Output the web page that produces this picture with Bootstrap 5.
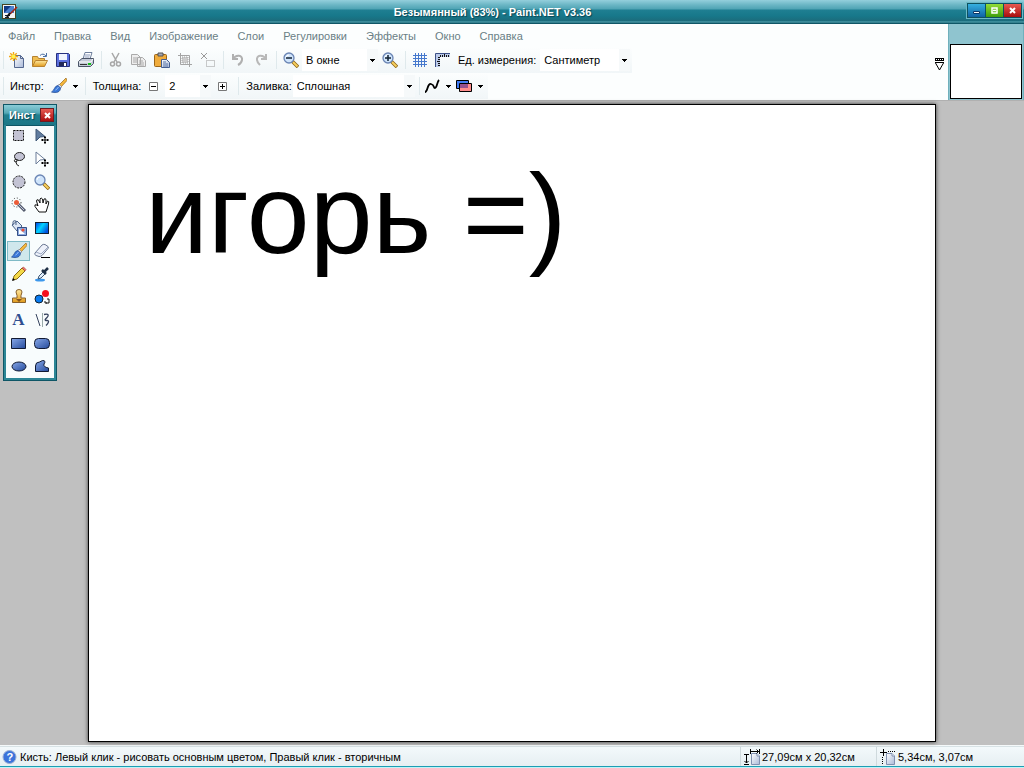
<!DOCTYPE html>
<html lang="ru">
<head>
<meta charset="utf-8">
<meta name="viewport" content="width=device-width, initial-scale=1">
<title>Безымянный (83%) - Paint.NET v3.36</title>
<link href="https://cdn.jsdelivr.net/npm/bootstrap@5.3.0/dist/css/bootstrap.min.css" rel="stylesheet">
<style>
body{font:11px/16px "Liberation Sans",Arial,sans-serif;color:#000;background:#c0c0c0}
svg{display:block;flex:none}
button{padding:0;border:0;background:none;color:inherit}
.titlebar{height:24px;background:linear-gradient(#94cfdc 0,#6ab5c4 5px,#4fa3b4 9px,#1f7f92 10px,#17788a 16px,#1c6b7b 21px,#5aabb8 22px,#0f5666 23px);color:#fff}
.titlebar h1{font:bold 11px/16px "Liberation Sans",Arial,sans-serif;text-shadow:1px 1px 1px #0b4452}
.titlebar .app-icon{margin-left:2px}
.win-buttons{gap:1px;padding:1px;margin-right:2px;background:#0d5160;outline:1px solid #6db9c6}
.win-buttons button{width:17px;height:13px;display:grid;place-items:center}
.b-min{background:linear-gradient(#35b0e0,#0f62a4)}
.b-max{background:linear-gradient(#93dc39,#3d9e0b)}
.b-close{background:linear-gradient(#e75a51,#a80d0d)}
.tools-area{background:#fcfefe}
.menu{height:23px;gap:19px;padding-left:8px}
.menu a{color:#6a7f85;text-decoration:none}
.strip{height:26px}
.band{height:26px;background:linear-gradient(#fcfefe,#f1f6f8);padding-left:3px;padding-right:2px}
.tb{width:23px;height:23px;display:grid;place-items:center;flex:none}
.drop{width:32px;display:flex;align-items:center;justify-content:space-between;height:23px;flex:none;padding:0 3px 0 2px}
.split{width:1px;height:18px;background:#dfe9ec;margin:0 2px 0 4px;flex:none}
.split.first{margin:0 1px 0 0}
.pick{appearance:none;border:0;border-radius:0;height:22px;padding:0 14px 0 4px;font:inherit;color:#000;background:#fff url("data:image/svg+xml,%3Csvg xmlns='http://www.w3.org/2000/svg' width='11' height='22'%3E%3Cpath fill='%23f6f9fa' d='M0 0h11v22H0z'/%3E%3Cpath d='M3 10h5v1H7v1H6v1H5v-1H4v-1H3z'/%3E%3C/svg%3E") right center no-repeat;flex:none}
.label-s{flex:none;white-space:nowrap}
.opt{margin:0 1px 0 5px}
.thumbs{width:76px;background:#8fc4cf;border-left:1px solid #6fb0bc;border-right:1px solid #6fb0bc;padding:20px 1px 1px}
.thumb{display:block;border:1px solid #000;background:#fff;height:55px;width:100%}
.work{background:#c0c0c0;padding:3px 88px;border-top:1px solid #b0b0b0}
.sheet{border:1px solid #000;background:#fff;box-shadow:0 0 4px #333;padding:45px 56px}
.sheet p{font-size:113px;line-height:128px;white-space:nowrap}
.palette{position:absolute;left:3px;top:3px;width:54px;border:1px solid #0f5666;background:#2c8595;padding:0 2px 2px;box-shadow:inset 0 0 0 1px #2c8797}
.palette header{height:20px;margin:0 -2px;padding:0 3px 0 5px;background:linear-gradient(#8accd7,#56a8b6 8px,#21808f 10px,#1c7686);color:#fff;font-weight:bold;text-shadow:1px 1px 1px #0b4452}
.palette header button{width:12px;height:12px;display:grid;place-items:center;outline:1px solid #6d1b22}
.grid-tools{display:grid;grid-template-columns:23px 23px;gap:3px 0;background:#f8fcfd;padding:0 1px 2px;border-top:1px solid #0f5666}
.grid-tools button{height:20px;display:grid;place-items:center}
.grid-tools .on{background:#d0e7ec;outline:1px solid #7fbac6;outline-offset:-1px}
.letter{font:bold 17px/20px "Liberation Serif",serif;color:#304f91}
.status{height:23px;border-top:1px solid #f5f9fa;border-bottom:1px solid #bff3f7;background:#eef5f7}
.status-in{border-top:1px solid #d7e2e5;border-bottom:1px solid #1d9db3;background:linear-gradient(#f3f9fb,#e6eff2)}
.cell-a{padding-left:2px;gap:2px}
.cell-b,.cell-c{border-left:1px solid #cfdadd;gap:2px;padding-left:3px}
.cell-b{width:136px}.cell-c{width:148px}
</style>
</head>
<body class="vh-100 d-flex flex-column overflow-hidden">
<svg width="0" height="0" class="position-absolute" aria-hidden="true">
<defs>
<linearGradient id="gb" x2="1" y2="1"><stop stop-color="#88a8e8"/><stop offset="1" stop-color="#244a9c"/></linearGradient>
<linearGradient id="gy" x2="0" y2="1"><stop stop-color="#ffe9a0"/><stop offset="1" stop-color="#e09a1c"/></linearGradient>
<linearGradient id="gp" x2="1" y2="1"><stop stop-color="#fff"/><stop offset="1" stop-color="#a9b9d8"/></linearGradient>
<linearGradient id="gc" x2="1" y2=".6"><stop stop-color="#0038e8"/><stop offset=".5" stop-color="#00d4ff"/><stop offset="1" stop-color="#0050e0"/></linearGradient>
<symbol id="brush" viewBox="0 0 16 16"><path d="M15 0 8 7l2 2 6-6.500z" fill="#f6b83c" stroke="#99671d" stroke-width=".7"/><path d="m8 6 3 3-2 1-2-2z" fill="#e4e8f2" stroke="#667" stroke-width=".5"/><path d="M7 7.500C3 8 4 12 .5 14c5 1.500 9 0 9-4z" fill="#3a78d8" stroke="#1f478f" stroke-width=".7"/><path d="M4.500 12c2-1 2-2 3-3" stroke="#a7cbff" fill="none"/></symbol>
<symbol id="lens" viewBox="0 0 16 16"><path d="m9 9 6 6" stroke="#8c6414" stroke-width="3.500"/><path d="m10 10 4.500 4.500" stroke="#f7cf5e" stroke-width="2"/><circle cx="6" cy="6" r="5" fill="#cfe4fb" stroke="#6b85b4" stroke-width="1.300"/><path d="M3 6q0-3 3-3" stroke="#fff" fill="none"/></symbol>
<symbol id="page" viewBox="0 0 9 12"><path d="M.5.5H6l2.500 2.500v8.500h-8z" fill="url(#gp)" stroke="#8090b0"/><path d="M6 .5V3h2.500" fill="#fff" stroke="#8090b0"/></symbol>
<symbol id="cross" viewBox="0 0 7 7"><path d="M1 1l5 5M6 1 1 6" stroke="#fff" stroke-width="2"/></symbol>
<symbol id="caret" viewBox="0 0 5 3"><path d="M0 0h5v1H4v1H3v1H2V2H1V1H0z"/></symbol>
<symbol id="plusmove" viewBox="0 0 8 8"><path d="M4 0v8M0 4h8M3 1.500h2M3 6.500h2M1.500 3v2M6.500 3v2" stroke="#000"/></symbol>
</defs>
</svg>

<header class="titlebar d-flex align-items-center flex-shrink-0">
  <svg class="app-icon" width="16" height="18" viewBox="0 0 16 18"><rect x=".5" y="1.500" width="13" height="14" fill="#f5f5f5" stroke="#442"/><path d="M2 3h10v7H2z" fill="#4b82d0"/><path d="M2 3h7l-7 7z" fill="#103a83"/><path d="M3 12.500h5M3 14.500h4" stroke="#123"/><path d="M15 4 8 11" stroke="#a22518" stroke-width="1.600"/><path d="m8 10-3 4" stroke="#111" stroke-width="2"/></svg>
  <h1 class="flex-grow-1 text-center m-0">Безымянный (83%) - Paint.NET v3.36</h1>
  <div class="win-buttons d-flex mb-1">
    <button class="b-min" aria-label="Свернуть"><svg width="7" height="9"><path d="M.5 5.500h6v2h-6z" fill="#fff" stroke="#0b3768"/></svg></button>
    <button class="b-max" aria-label="Развернуть"><svg width="7" height="7"><path d="M1 1h5v5H1zM2 3.500h3" fill="none" stroke="#fff" stroke-width="1.500"/></svg></button>
    <button class="b-close" aria-label="Закрыть"><svg width="7" height="7"><use href="#cross"/></svg></button>
  </div>
</header>

<div class="d-flex flex-shrink-0">
 <div class="tools-area flex-grow-1 position-relative">
  <nav class="menu d-flex align-items-center" aria-label="Меню">
   <a href="#">Файл</a><a href="#">Правка</a><a href="#">Вид</a><a href="#">Изображение</a><a href="#">Слои</a><a href="#">Регулировки</a><a href="#">Эффекты</a><a href="#">Окно</a><a href="#">Справка</a>
  </nav>
  <div class="strip d-flex align-items-center">
   <div class="band d-flex align-items-center">
    <span class="split first"></span>
    <button class="tb" aria-label="Создать"><svg width="16" height="16"><path d="M5.500 3.500h6l3 3v9h-9z" fill="url(#gp)" stroke="#54678f"/><path d="M11.500 3.500v3h3" fill="none" stroke="#54678f"/><path d="M4.500 0v9M0 4.500h9M1.300 1.300l6.400 6.400M7.700 1.300 1.300 7.700" stroke="#f4a818" stroke-width="1.400"/><circle cx="4.500" cy="4.500" r="2" fill="#fff24a"/></svg></button>
    <button class="tb" aria-label="Открыть"><svg width="16" height="16"><path d="M.5 14V4.500h5l1 2h6V14z" fill="#f0be50" stroke="#b58230"/><path d="m.5 14.500 3-6h12l-3 6z" fill="url(#gy)" stroke="#b98330"/><path d="M8 3.500q3-3 6 .5M14.500 1v3.500H11" fill="none" stroke="#4b70a4"/></svg></button>
    <button class="tb" aria-label="Сохранить"><svg width="16" height="16"><path d="M1.500 1.500h12l1 1v12h-13z" fill="#5c70de" stroke="#27317e"/><path d="M4 2h8v6H4z" fill="#f1f5ff"/><path d="M4 10h8v4H4z" fill="#232a58"/><path d="M9 11h2v3H9z" fill="#fff"/></svg></button>
    <button class="tb" aria-label="Печать"><svg width="16" height="16"><path d="m5 7 2-6.500h7L12 7z" fill="#fff" stroke="#6e7f9c"/><path d="M7 3h5M6.500 5h5" stroke="#8999ba"/><path d="M.5 9.500 4 6.500h11.500v5l-3 3H.5z" fill="#c3cad7" stroke="#4b5568"/><path d="M1 10h12l2-3" fill="none" stroke="#fff"/><path d="M2 12.500h7" stroke="#333"/><path d="M10 12h3" stroke="#15bf1a" stroke-width="2"/></svg></button>
    <span class="split"></span>
    <button class="tb" aria-label="Вырезать"><svg width="16" height="16" fill="none" stroke="#a7a7a7" stroke-width="1.500"><path d="m4 1 5 9M11 1 6 10"/><circle cx="4.500" cy="12" r="2"/><circle cx="10.500" cy="12" r="2"/></svg></button>
    <button class="tb" aria-label="Копировать"><svg width="16" height="16" fill="#eee" stroke="#aaa"><path d="M.5 2.500h6l3 3v7h-9zM6.500 5.500h5l3 3v6h-8z"/><path d="M2 6h4M2 8h4M2 10h4M8 9h4M8 11h5M8 13h5"/></svg></button>
    <button class="tb" aria-label="Вставить"><svg width="16" height="16"><rect x=".5" y="2.500" width="12" height="12" rx="1" fill="#f0ac3c" stroke="#9b6518"/><path d="M4 1h5v3H4z" fill="#a3a7b5" stroke="#555"/><path d="M7.500 7.500h5l3 3v5h-8z" fill="url(#gp)" stroke="#455e91"/><path d="M9 10h3M9 12h5M9 14h5" stroke="#5873a5"/></svg></button>
    <button class="tb" aria-label="Обрезать"><svg width="16" height="16" fill="none" stroke="#a5a5a5"><path d="M3.500 1v11.500H15M1 3.500h11.500V15"/><rect x="5" y="5" width="6" height="6" fill="#ccc" stroke-dasharray="1 1"/></svg></button>
    <button class="tb" aria-label="Снять выделение"><svg width="16" height="16" fill="none" stroke="#999"><path d="m1 1 6 6M7 1 1 7"/><path d="M6.500 8.500h8v6h-8z" stroke-dasharray="1 1"/></svg></button>
    <span class="split"></span>
    <button class="tb" aria-label="Отменить"><svg width="16" height="16" fill="none" stroke="#b0b0b0" stroke-width="2"><path d="M3 2v5h5M3 7c3-5 10-4 9 1-.5 3-2 4-4 5"/></svg></button>
    <button class="tb" aria-label="Вернуть"><svg width="16" height="16" fill="none" stroke="#b8b8b8" stroke-width="2"><path d="M13 2v5H8M13 7C10 2 3 3 4 8c.5 3 2 4 3 5"/></svg></button>
    <span class="split"></span>
    <button class="tb" aria-label="Уменьшить"><svg width="16" height="16"><use href="#lens"/><path d="M3 6h6" stroke="#123" stroke-width="1.500"/></svg></button>
    <select class="pick" style="width:76px" aria-label="Масштаб"><option>В окне</option></select>
    <button class="tb" aria-label="Увеличить"><svg width="16" height="16"><use href="#lens"/><path d="M3 6h6M6 3v6" stroke="#123" stroke-width="1.500"/></svg></button>
    <span class="split"></span>
    <button class="tb" aria-label="Сетка"><svg width="16" height="16"><path d="M3.500 1v14M6.500 1v14M9.500 1v14M12.500 1v14M1 3.500h14M1 6.500h14M1 9.500h14M1 12.500h14" stroke="#4578cd"/></svg></button>
    <button class="tb" aria-label="Линейки"><svg width="16" height="16"><path d="M1 1h14v4H5v10H1z" fill="#bccbea"/><path d="M.5 15V1.500H15" fill="none" stroke="#3d5187"/><path d="M5.500 3v2M7.500 3v2M9.500 2v3M11.500 3v2M13.500 3v2M3 5.500h2M3 7.500h2M2 9.500h3M3 11.500h2M3 13.500h2" stroke="#111"/></svg></button>
    <label class="label-s mx-1" for="units">Ед. измерения:</label>
    <select class="pick" id="units" style="width:90px"><option>Сантиметр</option></select>
   </div>
  </div>
  <div class="strip d-flex align-items-center">
   <div class="band d-flex align-items-center">
    <span class="split first"></span>
    <span class="label-s opt pe-1">Инстр:</span>
    <button class="drop" aria-label="Инструмент"><svg width="16" height="16"><use href="#brush"/></svg><svg width="5" height="3"><use href="#caret"/></svg></button>
    <span class="split"></span>
    <label class="label-s opt" for="bw">Толщина:</label>
    <button class="tb" aria-label="Тоньше"><svg width="9" height="9"><path d="M.5.5h8v8h-8z" fill="#fff" stroke="#777"/><path d="M2 4.500h5" stroke="#000"/></svg></button>
    <select class="pick" id="bw" style="width:46px"><option>2</option></select>
    <button class="tb" aria-label="Толще"><svg width="9" height="9"><path d="M.5.5h8v8h-8z" fill="#fff" stroke="#777"/><path d="M2 4.500h5M4.500 2v5" stroke="#000"/></svg></button>
    <span class="split"></span>
    <label class="label-s opt" for="fill">Заливка:</label>
    <select class="pick" id="fill" style="width:122px"><option>Сплошная</option></select>
    <span class="split"></span>
    <button class="drop" aria-label="Сглаживание"><svg width="16" height="16"><path d="M1 14C4 14 3 5 7 6s2 4 4 4 2-6 4-8" fill="none" stroke="#000" stroke-width="1.800"/></svg><svg width="5" height="3"><use href="#caret"/></svg></button>
    <button class="drop" aria-label="Наложение"><svg width="16" height="14"><path d="M.5 1.500h12v8H.500z" fill="#3f7bf5" stroke="#000"/><path d="M3.500 4.500h12v8h-12z" fill="#ff8d8d" stroke="#000"/><path d="M4 5h8v4H4z" fill="#95508f"/></svg><svg width="5" height="3"><use href="#caret"/></svg></button>
   </div>
  </div>
  <button class="position-absolute bottom-0 end-0 mb-4 me-1" style="height:20px" aria-label="Список изображений"><svg width="9" height="13" class="mb-1"><path d="M0 0h9v3H0z"/><path d="M1 1.500h7" stroke="#fff" stroke-dasharray="1 1"/><path d="M0 4.500h9M.500 5l4 7 4-7" fill="none" stroke="#000"/></svg></button>
 </div>
 <aside class="thumbs flex-shrink-0"><button class="thumb" aria-label="Безымянный"></button></aside>
</div>

<main class="work flex-grow-1 position-relative d-flex">
 <section class="sheet flex-grow-1"><p class="m-0">игорь =)</p></section>
 <section class="palette">
  <header class="d-flex align-items-center justify-content-between">Инст<button class="b-close" aria-label="Закрыть"><svg width="7" height="7"><use href="#cross"/></svg></button></header>
  <div class="grid-tools">
   <button aria-label="Выделение"><svg width="16" height="16"><rect x="2.500" y="2.500" width="10" height="10" fill="#c3c3d4" stroke="#111" stroke-dasharray="2 1"/></svg></button>
   <button aria-label="Перемещение"><svg width="16" height="17"><path d="M2 1v12l4-4 5-.5z" fill="#617d9f" stroke="#405877"/><use href="#plusmove" x="7" y="8" width="8" height="8"/></svg></button>
   <button aria-label="Лассо"><svg width="16" height="16"><ellipse cx="8.500" cy="5.500" rx="5" ry="4" fill="#c3c3d4" stroke="#222"/><path d="M5 8q-3 1-1 3 3 0 2-3M5 11q0 3 3 4" fill="none" stroke="#222"/></svg></button>
   <button aria-label="Перемещение выделения"><svg width="16" height="17"><path d="M2 1v12l4-4 5-.5z" fill="#fff" stroke="#6b7d99"/><use href="#plusmove" x="7" y="8" width="8" height="8"/></svg></button>
   <button aria-label="Овальное выделение"><svg width="16" height="16"><circle cx="8" cy="8" r="6" fill="#c3c3d4" stroke="#111" stroke-dasharray="2 1"/></svg></button>
   <button aria-label="Лупа"><svg width="16" height="16"><use href="#lens"/></svg></button>
   <button aria-label="Волшебная палочка"><svg width="16" height="16"><circle cx="5.500" cy="5.500" r="4.500" fill="none" stroke="#333" stroke-dasharray="1 2"/><path d="m7 7 7 7" stroke="#555b6d" stroke-width="3"/><path d="m7 7 6 6" stroke="#bdc5db" stroke-width="1"/><circle cx="5.500" cy="5.500" r="2.500" fill="#ec5c37"/></svg></button>
   <button aria-label="Рука"><svg width="16" height="16"><path d="M5 15 1 9.500Q0 7 3 8l1 1-1.500-5q0-2 2-1L6 6V2q1-2 2.500 0L9 6l1-4q2-1 2 1v4l1.500-3q2 0 1 3L12 15z" fill="#fff" stroke="#111"/></svg></button>
   <button aria-label="Заливка"><svg width="16" height="16"><path d="m1 5 5-4 5 5-5 5z" fill="#dce6f5" stroke="#4b6289"/><path d="M2 5V2q0-2 3-1v4" fill="none" stroke="#4b6289"/><path d="M6.500 7.500h9v8h-9z" fill="#8dabe0" stroke="#354f88"/><path d="M8 14V9l6 5z" fill="#fff"/><circle cx="12" cy="10" r="1.600" fill="#ed5034"/></svg></button>
   <button aria-label="Градиент"><svg width="14" height="12"><rect x=".5" y=".5" width="13" height="11" fill="url(#gc)" stroke="#123"/></svg></button>
   <button class="on" aria-label="Кисть"><svg width="16" height="16"><use href="#brush"/></svg></button>
   <button aria-label="Ластик"><svg width="16" height="16"><path d="m1 10 7-8q1-1 3-.500l3 2q1 1 0 2l-6 7q-1 1-3 1l-3-1q-2-1-1-2.500z" fill="#edf1fa" stroke="#6b7893"/><path d="m2 9 5 2 7-7" fill="none" stroke="#9daac4"/><path d="M7 14.500h9" stroke="#000"/></svg></button>
   <button aria-label="Карандаш"><svg width="16" height="16"><path d="m2 14 1-4 8-8 3 3-8 8z" fill="#f4d948" stroke="#846817"/><path d="m11 2 1.500-1L15 3.500 14 5z" fill="#ee786e" stroke="#a43c32" stroke-width=".6"/><path d="m1 15 1-3 2 2z"/></svg></button>
   <button aria-label="Пипетка"><svg width="16" height="16"><ellipse cx="6" cy="14" rx="5" ry="1.500" fill="#3d98ec"/><path d="m4 13 1-3 5-5 2 2-5 5z" fill="#e1effb" stroke="#3e5876"/><path d="m8 4 4 4M10 6l4-4" stroke="#1f3046" stroke-width="2.500"/></svg></button>
   <button aria-label="Штамп"><svg width="16" height="16"><path d="M6 6.500 5 3q0-2.500 3-2.500T11 3l-1 3.500V9h4.500v4.500h-13V9H6z" fill="url(#gy)" stroke="#88612c"/><path d="M5 10h6l-3 3z" fill="#85541d"/></svg></button>
   <button aria-label="Замена цвета"><svg width="16" height="16"><circle cx="11.500" cy="4.500" r="3.500" fill="#f3101e"/><circle cx="5" cy="10" r="4" fill="#087cf2" stroke="#123"/><path d="M10 13h2v2M12 14h3v-4h-2" fill="none" stroke="#111"/></svg></button>
   <button class="letter" aria-label="Текст">A</button>
   <button aria-label="Линия"><svg width="16" height="16" fill="none" stroke="#35425e"><path d="m2 2 4 12"/><path d="M8.500 1v14" stroke="#9aa"/><path d="M10 2.500c5-1 5 1 3 3s-3 3 0 3 1 3-1 5" stroke-width="1.300"/></svg></button>
   <button aria-label="Прямоугольник"><svg width="15" height="11"><path d="M.5.5h14v10H.5z" fill="url(#gb)" stroke="#111a33"/></svg></button>
   <button aria-label="Скругленный прямоугольник"><svg width="16" height="11"><rect x=".5" y=".5" width="15" height="10" rx="4" fill="url(#gb)" stroke="#111a33"/></svg></button>
   <button aria-label="Эллипс"><svg width="16" height="11"><ellipse cx="8" cy="5.500" rx="7" ry="4.500" fill="url(#gb)" stroke="#111a33"/></svg></button>
   <button aria-label="Произвольная фигура"><svg width="16" height="13"><path d="M1.500 11.500V6q0-4 4-4l3-1.500q4 0 1.500 3.500-1 3 4.500 4v3.500z" fill="url(#gb)" stroke="#111a33"/></svg></button>
  </div>
 </section>
</main>

<footer class="status flex-shrink-0">
 <div class="status-in h-100 d-flex">
  <div class="cell-a flex-grow-1 d-flex align-items-center"><svg width="16" height="16"><circle cx="7.500" cy="8" r="6.500" fill="#3b73db" stroke="#98aed4"/><text x="4.500" y="12" font-family="Liberation Sans,sans-serif" font-size="11" font-weight="bold" fill="#fff">?</text></svg><span>Кисть: Левый клик - рисовать основным цветом, Правый клик - вторичным</span></div>
  <div class="cell-b d-flex align-items-center"><svg width="16" height="16"><use href="#page" x="7" y="4" width="9" height="12"/><path d="M6.500 0v5M7 2.500h8M15.500 0v5M12.500.5l2 2-2 2M0 5.500h5M2.500 6v8M0 15.500h5M.5 12l2 2 2-2" fill="none" stroke="#000"/></svg><span>27,09см x 20,32см</span></div>
  <div class="cell-c d-flex align-items-center"><svg width="16" height="16"><use href="#page" x="6" y="4" width="9" height="12"/><path d="M3.500 0v7M0 3.500h7" stroke="#000"/><path d="M8 2.500h7M2.500 8v7" stroke="#000" stroke-dasharray="1 1"/></svg><span>5,34см, 3,07см</span></div>
 </div>
</footer>
<script src="https://cdn.jsdelivr.net/npm/bootstrap@5.3.0/dist/js/bootstrap.bundle.min.js"></script>
</body>
</html>
